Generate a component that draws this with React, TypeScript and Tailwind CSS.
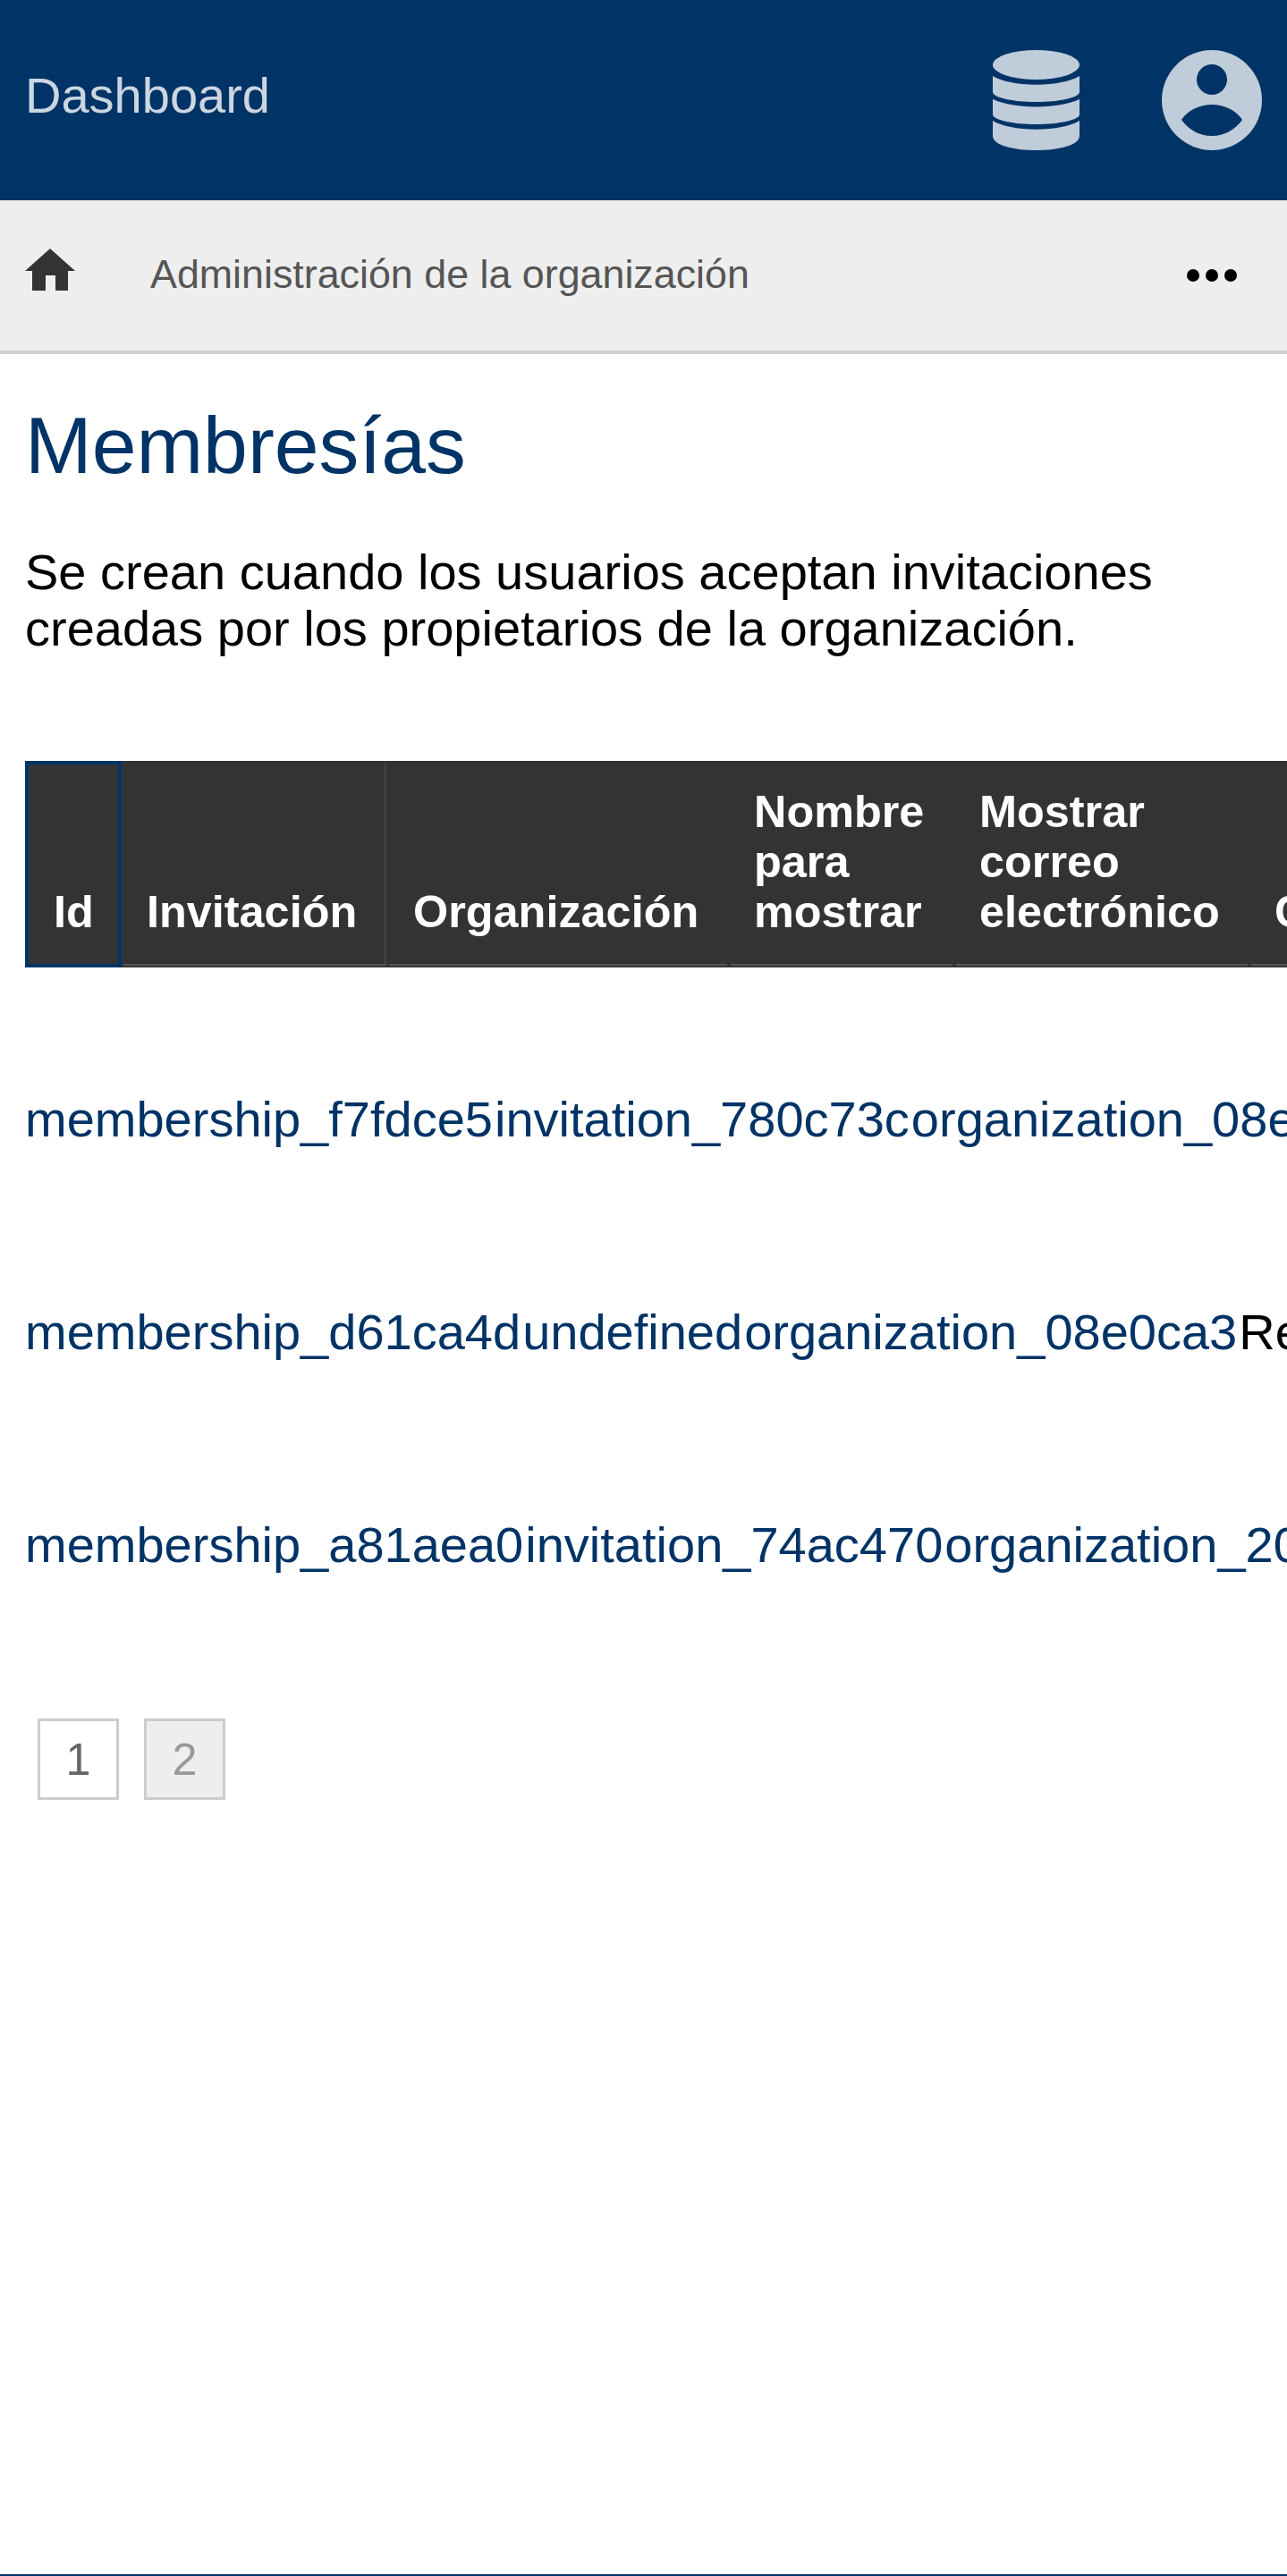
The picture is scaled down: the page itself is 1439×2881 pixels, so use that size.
import React from 'react';

const rows = [
  { id: 'membership_f7fdce5', inv: 'invitation_780c73c', org: 'organization_08e0ca3', name: 'Re' },
  { id: 'membership_d61ca4d', inv: 'undefined', org: 'organization_08e0ca3', name: 'Re' },
  { id: 'membership_a81aea0', inv: 'invitation_74ac470', org: 'organization_20e0ca3', name: 'Re' },
];

const Header = () => (
  <header className="h-[224px] bg-[#003366] flex items-center justify-between pl-[28px]">
    <span className="text-[56px] leading-[64px] mb-[10px] text-[#ccd6e0]">Dashboard</span>
    <div className="flex items-center">
      <svg viewBox="0 0 97 112" className="w-[97px] h-[112px] fill-[#bfccd9]">
        <ellipse cx="48.5" cy="16.5" rx="48.5" ry="16.5" />
        <path d="M0 29C10 35 28 38.7 48.5 38.7S87 35 97 29V47C97 53 75 58 48.5 58S0 53 0 47z" />
        <path d="M0 54.7C10 60 28 63.4 48.5 63.4S87 60 97 54.7V72C97 78 75 83 48.5 83S0 78 0 72z" />
        <path d="M0 79C10 85 28 88.7 48.5 88.7S87 85 97 79V96C97 106 75 112 48.5 112S0 106 0 96z" />
      </svg>
      <svg viewBox="0 0 112 112" className="w-[112px] h-[112px] ml-[92px] mr-[28px]">
        <path
          fillRule="evenodd"
          fill="#bfccd9"
          d="M56 0a56 56 0 1 0 0 112A56 56 0 0 0 56 0zm0 16a17 17 0 1 1 0 34 17 17 0 0 1 0-34zM22 78C28 68 42 61 56 61S84 68 90 78C82 89 70 96 56 96S30 89 22 78z"
        />
      </svg>
    </div>
  </header>
);

const SubBar = () => (
  <div className="h-[172px] bg-[#eeeeee] border-b-[4px] border-[#d0d0d0] flex items-center pl-[28px] pr-[56px]">
    <svg viewBox="0 0 56 48" className="w-[56px] h-[48px] mb-[12px] fill-[#333333]">
      <path d="M28 0L56 25H48V47H34V30H23V47H8V25H0z" />
    </svg>
    <span className="ml-[84px] mb-[4px] text-[44.8px] leading-[52px] text-[#555555] flex-1">
      Administración de la organización
    </span>
    <div className="flex gap-[7px]">
      <span className="w-[14px] h-[14px] rounded-full bg-black" />
      <span className="w-[14px] h-[14px] rounded-full bg-black" />
      <span className="w-[14px] h-[14px] rounded-full bg-black" />
    </div>
  </div>
);

type ThProps = { children: React.ReactNode; w: string; first?: boolean; sep?: boolean; pad?: string };

const Th = ({ children, w, first, sep, pad = 'pl-[26px]' }: ThProps) => (
  <th
    className={
      'box-border p-0 align-bottom text-left font-bold text-[50.4px] leading-[56px] text-white bg-[#333333] ' + w
    }
  >
    {first ? (
      <div className="h-[231px] flex flex-col justify-end pb-[30px] pl-[28px] border-[4px] border-[#003366]">
        <span>{children}</span>
      </div>
    ) : (
      <div
        className={
          'h-[226px] mt-[3px] mb-[2px] ml-[2px] flex flex-col justify-end pb-[30px] border-b-[2px] border-b-[#555555] ' +
          pad +
          (sep ? ' mr-[1px] border-r-[2px] border-r-[#444444]' : ' mr-[2px]')
        }
      >
        <span>{children}</span>
      </div>
    )}
  </th>
);

export default function App() {
  return (
    <div className="w-[1439px] h-[2881px] overflow-hidden bg-white border-b-[2px] border-[#003366] font-['Liberation_Sans',Arial,sans-serif]">
      <Header />
      <SubBar />
      <main className="pl-[28px]">
        <h1 className="mt-[46px] text-[89.6px] leading-[112px] text-[#003366]">Membresías</h1>
        <p className="mt-[54px] w-[1340px] text-[56px] leading-[63px] text-black">
          Se crean cuando los usuarios aceptan invitaciones creadas por los propietarios de la organización.
        </p>
        <table className="mt-[117px] table-fixed border-collapse w-[1500px]">
          <thead>
            <tr>
              <Th first w="w-[108px]">Id</Th>
              <Th sep w="w-[297px]">Invitación</Th>
              <Th pad="pl-[27px]" w="w-[382px]">Organización</Th>
              <Th w="w-[252px]">
                Nombre
                <br />
                para
                <br />
                mostrar
              </Th>
              <Th w="w-[330px]">
                Mostrar
                <br />
                correo
                <br />
                electrónico
              </Th>
              <Th w="w-[131px]">Creado</Th>
            </tr>
          </thead>
        </table>
        <div className="mt-[51px]">
          {rows.map((r) => (
            <div key={r.id} className="h-[238px] flex items-center gap-[2px] whitespace-nowrap text-[56px] leading-[64px]">
              <a className="text-[#003366]">{r.id}</a>
              <a className="text-[#003366]">{r.inv}</a>
              <a className="text-[#003366]">{r.org}</a>
              <span className="text-black">{r.name}</span>
            </div>
          ))}
        </div>
        <nav className="mt-[75px] ml-[14px] flex gap-[28px]">
          <span className="w-[91px] h-[91px] border-[3px] border-[#cccccc] flex items-center justify-center text-[50.4px] text-[#666666]">
            1
          </span>
          <span className="w-[91px] h-[91px] border-[3px] border-[#cccccc] bg-[#eeeeee] flex items-center justify-center text-[50.4px] text-[#999999]">
            2
          </span>
        </nav>
      </main>
    </div>
  );
}
